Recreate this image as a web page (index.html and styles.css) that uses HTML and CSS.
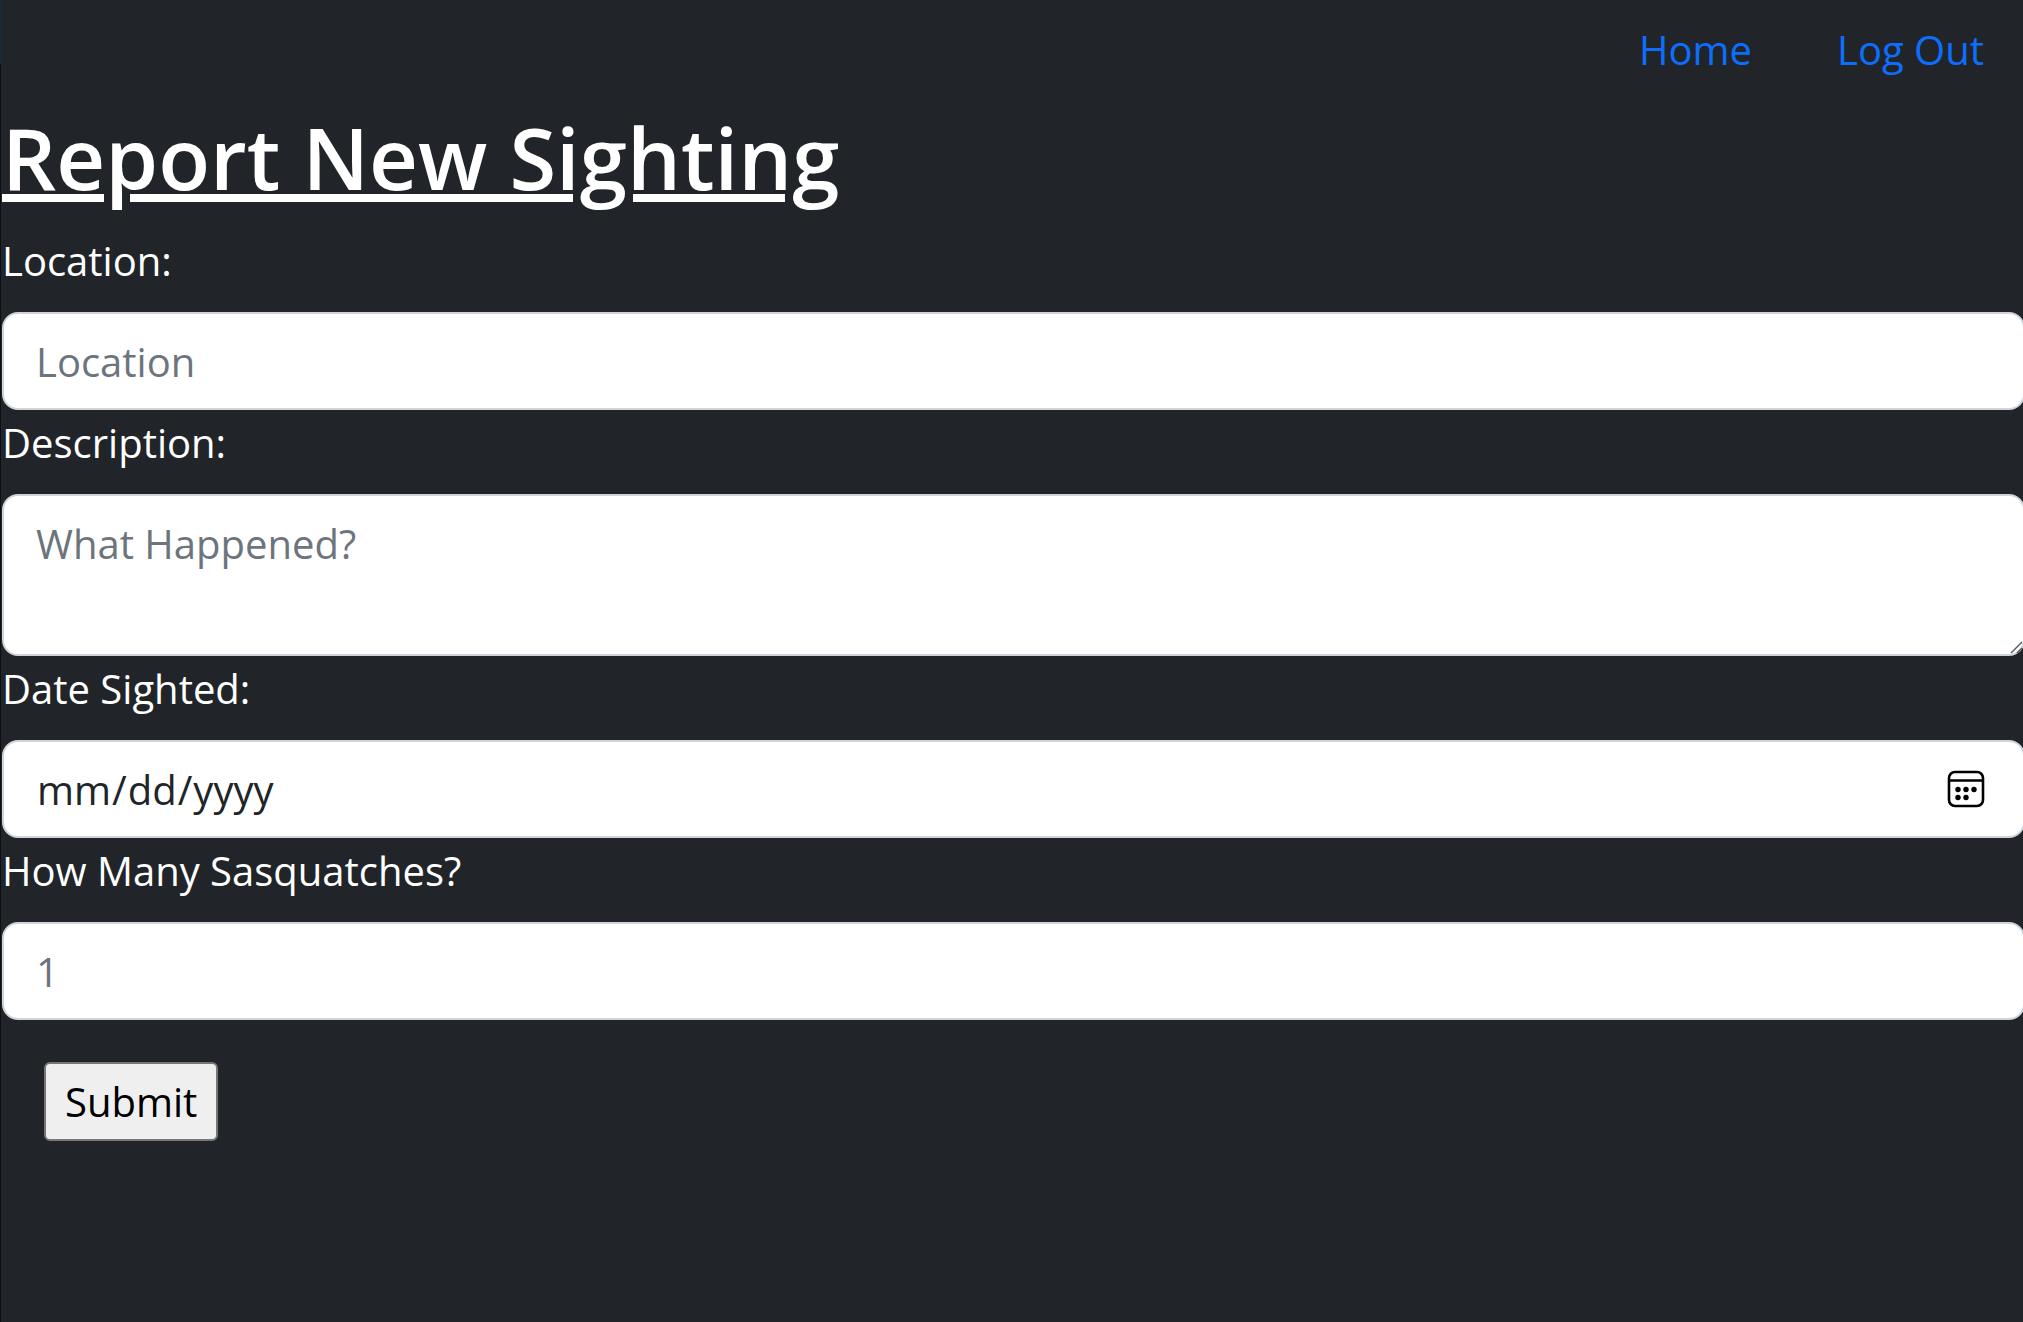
FILE: index.html
```html
<!DOCTYPE html>
<html lang="en">
<head>
  <meta charset="utf-8">
  <meta name="viewport" content="width=device-width, initial-scale=1">
  <title>Report New Sighting</title>
  <link rel="stylesheet" href="styles.css">
</head>
<body>
  <nav class="navbar">
    <a class="nav-link" href="#home">Home</a>
    <a class="nav-link" href="#logout">Log Out</a>
  </nav>
  <main class="page">
    <h1 class="title">Report New Sighting</h1>
    <form class="form">
      <label class="form-label" for="location">Location:</label>
      <input class="form-control" id="location" type="text" placeholder="Location">
      <label class="form-label" for="description">Description:</label>
      <textarea class="form-control form-area" id="description" placeholder="What Happened?"></textarea>
      <label class="form-label" for="date">Date Sighted:</label>
      <input class="form-control" id="date" type="date">
      <label class="form-label" for="count">How Many Sasquatches?</label>
      <input class="form-control" id="count" type="number" placeholder="1">
      <button class="submit" type="submit">Submit</button>
    </form>
  </main>
</body>
</html>
```
FILE: styles.css
```css
*,
*::before,
*::after {
  box-sizing: border-box;
}

html {
  min-height: 100%;
  background: #212529 linear-gradient(#0b2f45 64px, #0c0e10 64px) left top / 1px 100% no-repeat;
}

body {
  margin: 0;
  padding-left: 2px;
  overflow-x: hidden;
  color: #fff;
  font-family: "Segoe UI", "Open Sans", "Noto Sans", sans-serif;
  font-size: 40px;
  line-height: 63px;
}

.navbar {
  display: flex;
  justify-content: flex-end;
  gap: 85px;
  padding: 18px 39px 23px;
}

.nav-link {
  color: #0d6efd;
  text-decoration: none;
}

.title {
  margin: 0 0 19px;
  font-size: 85px;
  font-weight: 600;
  line-height: 106px;
  text-decoration: underline;
  text-decoration-thickness: 8px;
}

.form {
  display: flex;
  flex-direction: column;
  margin-right: -2px;
}

.form-label {
  margin-bottom: 20px;
}

.form-control {
  width: 100%;
  height: 98px;
  margin: 0;
  padding: 16px 32px;
  border: 2px solid #ced4da;
  border-radius: 16px;
  background: #fff;
  color: #212529;
  font: inherit;
}

.form-control + .form-label {
  margin-top: 1px;
}

.form-control::placeholder {
  color: #6c757d;
  opacity: 1;
}

.form-area {
  height: 162px;
  resize: vertical;
}

.form-area::-webkit-resizer {
  background: url("data:image/svg+xml,%3Csvg xmlns='http://www.w3.org/2000/svg' viewBox='0 0 15 15'%3E%3Cpath d='M3 14 14 3M9 14l5-5' stroke='%23555' stroke-width='1.4'/%3E%3C/svg%3E") right bottom / 15px 15px no-repeat;
}

.form-control::-webkit-datetime-edit,
.form-control::-webkit-datetime-edit-fields-wrapper {
  padding: 0;
}

.form-control::-webkit-calendar-picker-indicator {
  width: 38px;
  height: 38px;
  margin: 0 6px 0 0;
  padding: 0;
  background: url("data:image/svg+xml,%3Csvg xmlns='http://www.w3.org/2000/svg' viewBox='0 0 38 38'%3E%3Crect x='2' y='2' width='34' height='34' rx='6' fill='none' stroke='%23000' stroke-width='2.6'/%3E%3Cpath d='M2 10.5h34' stroke='%23000' stroke-width='2.6'/%3E%3Cg fill='%23000'%3E%3Ccircle cx='11' cy='19.5' r='2.7'/%3E%3Ccircle cx='19' cy='19.5' r='2.7'/%3E%3Ccircle cx='27' cy='19.5' r='2.7'/%3E%3Ccircle cx='11' cy='27.5' r='2.7'/%3E%3Ccircle cx='19' cy='27.5' r='2.7'/%3E%3C/g%3E%3C/svg%3E") center / 38px 38px no-repeat;
}

.submit {
  align-self: flex-start;
  margin: 42px;
  padding: 6px 19px;
  border: 2px solid #767676;
  border-radius: 6px;
  background: #efefef;
  color: #000;
  font: inherit;
}
```
